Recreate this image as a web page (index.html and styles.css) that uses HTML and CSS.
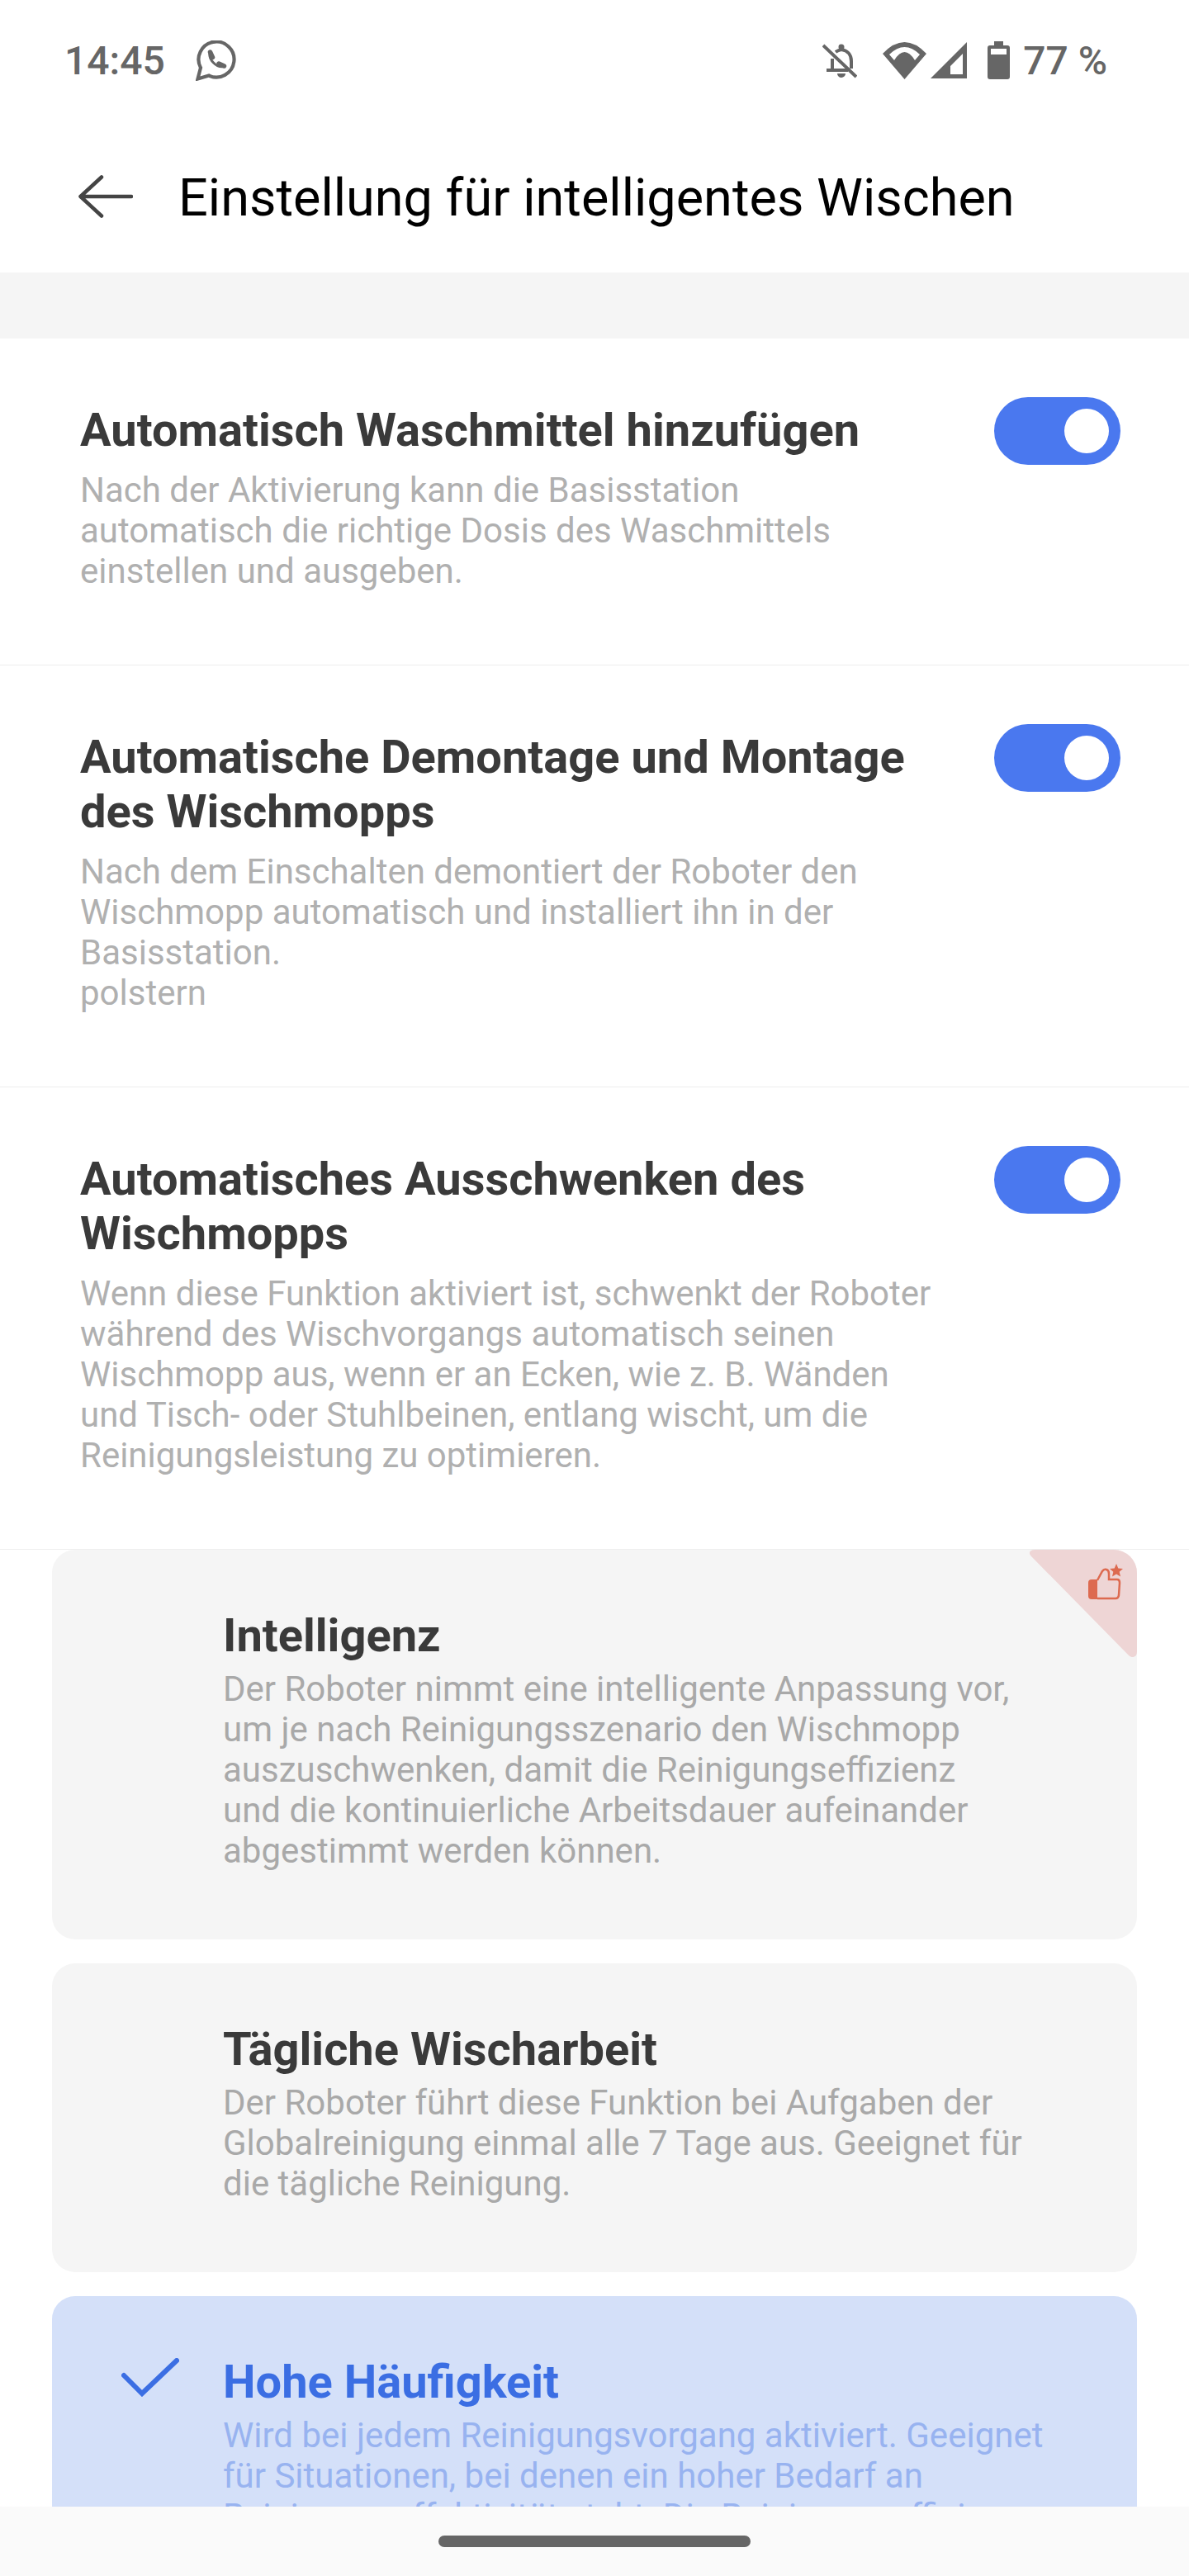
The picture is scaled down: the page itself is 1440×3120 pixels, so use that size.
FILE: index.html
```
<!DOCTYPE html>
<html lang="de">

<head>
    <meta charset="UTF-8" />
    <meta name="viewport" content="width=device-width, initial-scale=1.0" />
    <title>Einstellung für intelligentes Wischen</title>

    <link rel="stylesheet" href="styles.css">
</head>

<body>
    <div class="screen">
        <header class="statusbar">
            <div class="status-left">
                <span>14:45</span>
                <svg class="icon-whatsapp" width="49" height="49" viewBox="0 0 49 49">
                    <path d="M2.5 46.5 L6 33 A21.5 21.5 0 1 1 16 42.5 Z" fill="none" stroke="#666" stroke-width="4.2" stroke-linejoin="miter" />
                    <path d="M17 15 C15.5 23 25 33.5 34 31.5" fill="none" stroke="#666" stroke-width="3" />
                    <path d="M17.5 14 L20.5 20.5 M28 28 L34.5 31" fill="none" stroke="#666" stroke-width="5.5" stroke-linecap="round" />
                </svg>
            </div>
            <div class="status-right">
                <svg class="icon-bell" width="42" height="43" viewBox="0 0 42 43">
                    <path d="M12 19V33M35 31V22C35 14 30 9 23 8C20 8.500 18 9.500 16 11M5 33H31M1 3L41 41" fill="none" stroke="#666" stroke-width="4" />
                    <circle cx="23" cy="5" r="3.500" fill="#666" />
                    <path d="M18 37H28A5 5 0 0 1 18 37Z" fill="#666" />
                </svg>
                <svg class="icon-wifi" width="53" height="45" viewBox="0 0 53 45">
                    <path fill="#666" fill-rule="evenodd" d="M0 14Q26.500 -14 53 14L26.500 45ZM8 15L14 22Q26.500 2 39 22L45 15Q26.500 -3 8 15Z" />
                </svg>
                <svg class="icon-signal" width="44" height="44" viewBox="0 0 44 44">
                    <path fill="#666" fill-rule="evenodd" d="M0 44L44 0V44ZM24 39H39V14L24 29Z" />
                </svg>
                <svg class="icon-battery" width="27" height="46" viewBox="0 0 27 46">
                    <path fill="#666" fill-rule="evenodd" d="M8 0H19V5H24Q27 5 27 8V43Q27 46 24 46H3Q0 46 0 43V8Q0 5 3 5H8ZM4 9V16H23V9Z" />
                </svg>
                <span class="battery-level">77 %</span>
            </div>
        </header>

        <div class="toolbar">
            <svg class="icon-back" width="66" height="52" viewBox="0 0 66 52">
                <path d="M28 2.500L2.500 26L28 49.500M3 26H64" fill="none" stroke="#444" stroke-width="4.500" stroke-linecap="round" stroke-linejoin="round" />
            </svg>
            <h1>Einstellung für intelligentes Wischen</h1>
        </div>

        <div class="band"></div>

        <main class="content">
            <section class="row">
                <div class="row-text">
                    <h2>Automatisch Waschmittel hinzufügen</h2>
                    <p>Nach der Aktivierung kann die Basisstation automatisch die richtige Dosis des Waschmittels einstellen und ausgeben.</p>
                </div>
                <span class="switch"></span>
            </section>

            <section class="row">
                <div class="row-text">
                    <h2>Automatische Demontage und Montage des Wischmopps</h2>
                    <p>Nach dem Einschalten demontiert der Roboter den Wischmopp automatisch und installiert ihn in der Basisstation.<br>polstern</p>
                </div>
                <span class="switch"></span>
            </section>

            <section class="row row-last">
                <div class="row-text">
                    <h2>Automatisches Ausschwenken des Wischmopps</h2>
                    <p>Wenn diese Funktion aktiviert ist, schwenkt der Roboter während des Wischvorgangs automatisch seinen Wischmopp aus, wenn er an Ecken, wie z. B. Wänden und Tisch- oder Stuhlbeinen, entlang wischt, um die Reinigungsleistung zu optimieren.</p>
                </div>
                <span class="switch"></span>
            </section>

            <div class="options">
                <article class="option option-recommended">
                    <svg class="badge" width="130" height="130" viewBox="0 0 130 130">
                        <path fill="#eed5d5" d="M6 0H102A28 28 0 0 1 130 28V124C130 130 124 132 120 128L2 8C-2 4 0 0 6 0Z" />
                        <path fill="#dd6a50" d="M82 36V60H75Q71 60 71 56V40Q71 36 75 36Z" />
                        <path fill="none" stroke="#dd6a50" stroke-width="2.500" d="M82 37L88 26Q90 23 93 24Q96 25 96 29V36H106Q109 36 109 40L108 55Q107.500 59 104 59H82" />
                        <path fill="#dd6a50" d="M105 17L107.300 22.500L113 23L108.700 26.800L110 32.500L105 29.500L100 32.500L101.300 26.800L97 23L102.700 22.500Z" />
                    </svg>
                    <div></div>
                    <div class="option-text">
                        <h3>Intelligenz</h3>
                        <p>Der Roboter nimmt eine intelligente Anpassung vor, um je nach Reinigungsszenario den Wischmopp auszuschwenken, damit die Reinigungseffizienz und die kontinuierliche Arbeitsdauer aufeinander abgestimmt werden können.</p>
                    </div>
                </article>

                <article class="option">
                    <div></div>
                    <div class="option-text">
                        <h3>Tägliche Wischarbeit</h3>
                        <p>Der Roboter führt diese Funktion bei Aufgaben der Globalreinigung einmal alle 7 Tage aus. Geeignet für die tägliche Reinigung.</p>
                    </div>
                </article>

                <article class="option option-selected">
                    <svg class="icon-check" width="70" height="47" viewBox="0 0 70 47">
                        <path d="M3 21L25 43L67 3" fill="none" stroke="#3b6ee3" stroke-width="6" stroke-linecap="round" />
                    </svg>
                    <div class="option-text">
                        <h3>Hohe Häufigkeit</h3>
                        <p>Wird bei jedem Reinigungsvorgang aktiviert. Geeignet für Situationen, bei denen ein hoher Bedarf an Reinigungseffektivität steht. Die Reinigungseffizienz und die Arbeitsdauer werden dadurch beeinflusst.</p>
                    </div>
                </article>
            </div>
        </main>

        <footer class="navbar">
            <span class="nav-handle"></span>
        </footer>
    </div>
</body>

</html>
```

FILE: styles.css
```
* {
    margin: 0;
    padding: 0;
    box-sizing: border-box;
}

html,
body {
    height: 100%;
}

body {
    font-family: Roboto, "Liberation Sans", sans-serif;
    background: #ffffff;
    overflow: hidden;
}

.screen {
    display: flex;
    flex-direction: column;
    width: 1440px;
    height: 3120px;
}

/**
* Status bar
*/
.statusbar {
    display: flex;
    align-items: center;
    justify-content: space-between;
    flex: none;
    height: 146px;
    padding: 0 99px 0 78px;
    color: #666666;
    font-size: 48px;
    font-weight: 500;
}

.status-left,
.status-right {
    display: flex;
    align-items: center;
}

.icon-whatsapp {
    margin-left: 37px;
    margin-top: 1px;
}

.icon-bell {
    margin-right: 31px;
}

.icon-wifi {
    margin-right: 5px;
}

.icon-signal {
    margin-right: 25px;
}

.battery-level {
    margin-left: 16px;
}

/**
* Toolbar
*/
.toolbar {
    display: flex;
    align-items: center;
    flex: none;
    height: 184px;
    padding-left: 95px;
}

.toolbar h1 {
    margin-left: 55px;
    padding-top: 3px;
    color: #000000;
    font-size: 63px;
    font-weight: normal;
    line-height: 76px;
}

.band {
    flex: none;
    height: 80px;
    background: #f5f5f5;
}

.content {
    flex: 1;
    min-height: 0;
    overflow: hidden;
}

/**
* Toggle rows
*/
.row {
    display: flex;
    justify-content: space-between;
    align-items: flex-start;
    padding: 71px 83px 89px 97px;
    border-bottom: 1px solid #eeeeee;
}

.row-text {
    width: 1038px;
    padding-top: 7px;
}

.row h2 {
    margin-bottom: 15px;
    color: #3a3a3a;
    font-size: 56px;
    font-weight: bold;
    line-height: 66px;
}

.row p,
.option p {
    color: #b0b0b0;
    font-size: 42px;
    line-height: 49px;
}

.switch {
    position: relative;
    flex: none;
    width: 153px;
    height: 82px;
    border-radius: 41px;
    background: #4a78ef;
}

.switch::after {
    content: "";
    position: absolute;
    top: 14px;
    right: 14px;
    width: 54px;
    height: 54px;
    border-radius: 50%;
    background: #ffffff;
}

/**
* Mode options
*/
.options {
    display: flex;
    flex-direction: column;
    gap: 29px;
    padding: 0 63px;
}

.option {
    position: relative;
    display: grid;
    grid-template-columns: 207px 1fr;
    padding: 71px 97px 83px 0;
    border-radius: 28px;
    background: #f5f5f5;
}

.option-recommended {
    padding-right: 140px;
}

.option h3 {
    margin-bottom: 7px;
    color: #3a3a3a;
    font-size: 56px;
    font-weight: bold;
    line-height: 66px;
}

.option p {
    color: #a9a9a9;
}

.badge {
    position: absolute;
    top: 0;
    right: 0;
}

.option-selected {
    background: #d4e0f9;
}

.option-selected h3 {
    color: #3b6ee3;
}

.option-selected p {
    color: #98b3f0;
}

.icon-check {
    margin: 4px 0 0 84px;
}

/**
* Navigation bar
*/
.navbar {
    display: flex;
    justify-content: center;
    flex: none;
    height: 84px;
    padding-top: 35px;
    background: #fafafa;
}

.nav-handle {
    width: 378px;
    height: 14px;
    border-radius: 7px;
    background: #666666;
}
```
